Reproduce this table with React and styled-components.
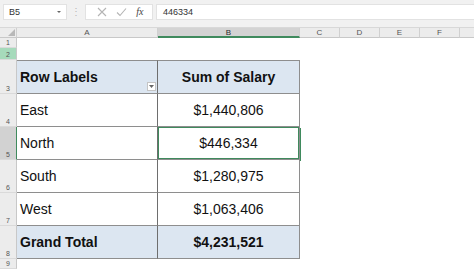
import styled, { createGlobalStyle } from 'styled-components';

const GlobalStyle = createGlobalStyle`
  html, body, #root { margin: 0; padding: 0; height: 100%; }
  body { font-family: "Liberation Sans", Arial, sans-serif; background: #fff; overflow: hidden; }
`

const columns = ['A', 'B', 'C', 'D', 'E', 'F', ''];

const pivotRows = [
  { n: 4, label: 'East', value: '$1,440,806' },
  { n: 5, label: 'North', value: '$446,334', selected: true },
  { n: 6, label: 'South', value: '$1,280,975' },
  { n: 7, label: 'West', value: '$1,063,406' },
];

function XIcon() {
  return (
    <svg width="10" height="10" viewBox="0 0 10 10">
      <path d="M1 1 L9 9 M9 1 L1 9" stroke="#b4b4b4" strokeWidth="1.1" fill="none" />
    </svg>
  );
}

function CheckIcon() {
  return (
    <svg width="11" height="10" viewBox="0 0 11 10">
      <path d="M1 5.5 L4 8.5 L10 1.5" stroke="#b4b4b4" strokeWidth="1.1" fill="none" />
    </svg>
  );
}

function App() {
  return (
    <>
      <GlobalStyle />
      <Page>
        <FormulaBar>
          <NameBox>
            <span>B5</span>
            <Caret />
          </NameBox>
          <Dots>⋮</Dots>
          <FxBox>
            <XIcon />
            <CheckIcon />
            <Fx>fx</Fx>
          </FxBox>
          <FormulaInput>446334</FormulaInput>
        </FormulaBar>
        <Sheet>
          <Corner>
            <svg width="7" height="7" viewBox="0 0 7 7">
              <path d="M7 0 L7 7 L0 7 Z" fill="#b8b8b8" />
            </svg>
          </Corner>
          {columns.map((c, i) => (
            <ColHeader key={i} $active={c === 'B'} $last={c === ''}>{c}</ColHeader>
          ))}

          <RowHeader>1</RowHeader>
          {columns.map((c, i) => <Cell key={'r1' + i} />)}

          <RowHeader $green>2</RowHeader>
          {columns.map((c, i) => <Cell key={'r2' + i} />)}

          <RowHeader>3</RowHeader>
          <PivotCell $head $bold $first $top>
            Row Labels
            <FilterButton>
              <svg width="5" height="3" viewBox="0 0 5 3">
                <path d="M0 0 L5 0 L2.5 3 Z" fill="#666" />
              </svg>
            </FilterButton>
          </PivotCell>
          <PivotCell $head $bold $center $top>Sum of Salary</PivotCell>
          {columns.slice(2).map((c, i) => <Cell key={'r3' + i} />)}

          {pivotRows.map((r) => (
            <Row key={r.n} r={r} />
          ))}

          <RowHeader>8</RowHeader>
          <PivotCell $head $bold $first>Grand Total</PivotCell>
          <PivotCell $head $bold $center>$4,231,521</PivotCell>
          {columns.slice(2).map((c, i) => <Cell key={'r8' + i} />)}

          <RowHeader>9</RowHeader>
          {columns.map((c, i) => <Cell key={'r9' + i} />)}
        </Sheet>
      </Page>
    </>
  );
}

function Row({ r }) {
  return (
    <>
      <RowHeader $active={r.selected}>{r.n}</RowHeader>
      <PivotCell $first>{r.label}</PivotCell>
      <PivotCell $center $selected={r.selected}>{r.value}</PivotCell>
      {columns.slice(2).map((c, i) => <Cell key={i} />)}
    </>
  );
}

const Page = styled.div`
  display: flex;
  flex-direction: column;
  height: 100%;
  width: 474px;
`

const FormulaBar = styled.div`
  display: flex;
  align-items: center;
  height: 28px;
  box-sizing: border-box;
  padding: 4px 0 8px 3px;
  background: #f1f1f1;
  border-bottom: 1px solid #d8d8d8;
`

const NameBox = styled.div`
  display: flex;
  align-items: center;
  justify-content: space-between;
  box-sizing: border-box;
  width: 64px;
  height: 16px;
  padding: 0 5px 0 5px;
  background: #fff;
  border: 1px solid #e2e2e2;
  font-size: 9px;
  color: #333;
`

const Caret = styled.span`
  width: 0;
  height: 0;
  border-left: 2px solid transparent;
  border-right: 2px solid transparent;
  border-top: 2px solid #666;
`

const Dots = styled.span`
  width: 18px;
  text-align: center;
  font-size: 10px;
  color: #b8b8b8;
`

const FxBox = styled.div`
  display: flex;
  align-items: center;
  justify-content: space-around;
  box-sizing: border-box;
  width: 68px;
  height: 16px;
  padding: 0 4px 0 6px;
  background: #fff;
  border: 1px solid #e2e2e2;
`

const Fx = styled.span`
  font-family: "Liberation Serif", "Times New Roman", serif;
  font-style: italic;
  font-size: 10px;
  color: #444;
`

const FormulaInput = styled.div`
  display: flex;
  align-items: center;
  flex: 1;
  box-sizing: border-box;
  height: 16px;
  margin-left: 3px;
  padding-left: 6px;
  background: #fff;
  border: 1px solid #e2e2e2;
  border-right: none;
  font-size: 9px;
  color: #333;
`

const Sheet = styled.div`
  flex: 1;
  display: grid;
  grid-template-columns: 17px 141px 142px 40px 40px 40px 40px 1fr;
  grid-template-rows: 10px 10px 12px 34px repeat(5, 33px) 1fr;
`

const Corner = styled.div`
  display: flex;
  align-items: flex-end;
  justify-content: flex-end;
  padding: 0 1px 1px 0;
  background: #ececec;
  border-right: 1px solid #d0d0d0;
  border-bottom: 1px solid #c8c8c8;
`

const ColHeader = styled.div`
  display: flex;
  align-items: center;
  justify-content: center;
  box-sizing: border-box;
  font-size: 8px;
  color: ${(p) => (p.$active ? '#2b2b2b' : '#555')};
  background: ${(p) => (p.$active ? '#d3d3d3' : '#ececec')};
  border-right: ${(p) => (p.$last ? 'none' : '1px solid #d0d0d0')};
  border-bottom: ${(p) => (p.$active ? '2px solid #3f8a5d' : '1px solid #c8c8c8')};
`

const RowHeader = styled.div`
  display: flex;
  align-items: flex-end;
  justify-content: center;
  box-sizing: border-box;
  padding-bottom: 1px;
  font-size: 7px;
  color: #555;
  background: ${(p) => (p.$green ? '#a6dabb' : p.$active ? '#d2d2d2' : '#ececec')};
  border-right: ${(p) => (p.$active ? '1px solid #3f8a5d' : '1px solid #c8c8c8')};
  border-bottom: 1px solid #dadada;
`

const Cell = styled.div`
  background: #fff;
`

const PivotCell = styled.div`
  position: relative;
  display: flex;
  align-items: center;
  justify-content: ${(p) => (p.$center ? 'center' : 'flex-start')};
  box-sizing: border-box;
  padding: ${(p) => (p.$center ? '0' : '0 0 0 3px')};
  font-size: 14px;
  font-weight: ${(p) => (p.$bold ? 700 : 400)};
  color: #111;
  background: ${(p) => (p.$head ? '#dce6f1' : '#fff')};
  border-top: ${(p) => (p.$top ? '1px solid #8e8e8e' : 'none')};
  border-bottom: 1px solid #8e8e8e;
  border-right: 1px solid ${(p) => (p.$first ? '#6e6e6e' : '#8e8e8e')};
  box-shadow: ${(p) => (p.$selected ? 'inset 0 0 0 1px #3f8a5d, 1px 1px 0 0 #3f8a5d' : 'none')};
`

const FilterButton = styled.span`
  position: absolute;
  right: 1px;
  bottom: 2px;
  display: flex;
  align-items: center;
  justify-content: center;
  width: 9px;
  height: 9px;
  box-sizing: border-box;
  background: #fff;
  border: 1px solid #c4c4c4;
`

export default App
